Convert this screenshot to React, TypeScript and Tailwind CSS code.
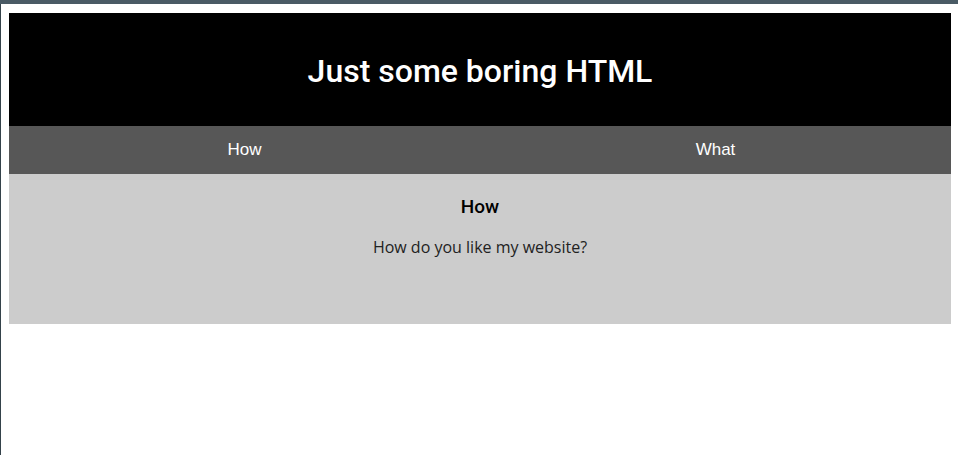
export default function App() {
  return (
    <div className="relative min-h-[455px] w-[958px] bg-white">
      <div className="h-[4px] w-full bg-[#4a5b65]" />
      <div className="absolute left-0 top-[4px] bottom-0 w-px bg-[#34424a]" />
      <div className="pl-[9px] pr-[7px] pt-[9px]">
        <header className="flex h-[113px] items-center justify-center bg-black pt-[2px]">
          <h1 className="text-[32px] font-medium text-white" style={{ fontFamily: "Roboto, sans-serif" }}>
            Just some boring HTML
          </h1>
        </header>
        <nav className="grid h-[48px] grid-cols-2 bg-[#575757] text-white" style={{ fontFamily: '"Liberation Sans", Arial, sans-serif' }}>
          <div className="flex items-center justify-center text-[17px]">How</div>
          <div className="flex items-center justify-center text-[17px]">What</div>
        </nav>
        <section className="flex h-[150px] flex-col items-center bg-[#cccccc] pt-[19px]">
          <h2 className="text-[19px] font-medium text-black" style={{ fontFamily: "Roboto, sans-serif" }}>
            How
          </h2>
          <p className="mt-[13px] text-[16px] text-[#222]" style={{ fontFamily: '"Open Sans", sans-serif' }}>
            How do you like my website?
          </p>
        </section>
      </div>
    </div>
  );
}
